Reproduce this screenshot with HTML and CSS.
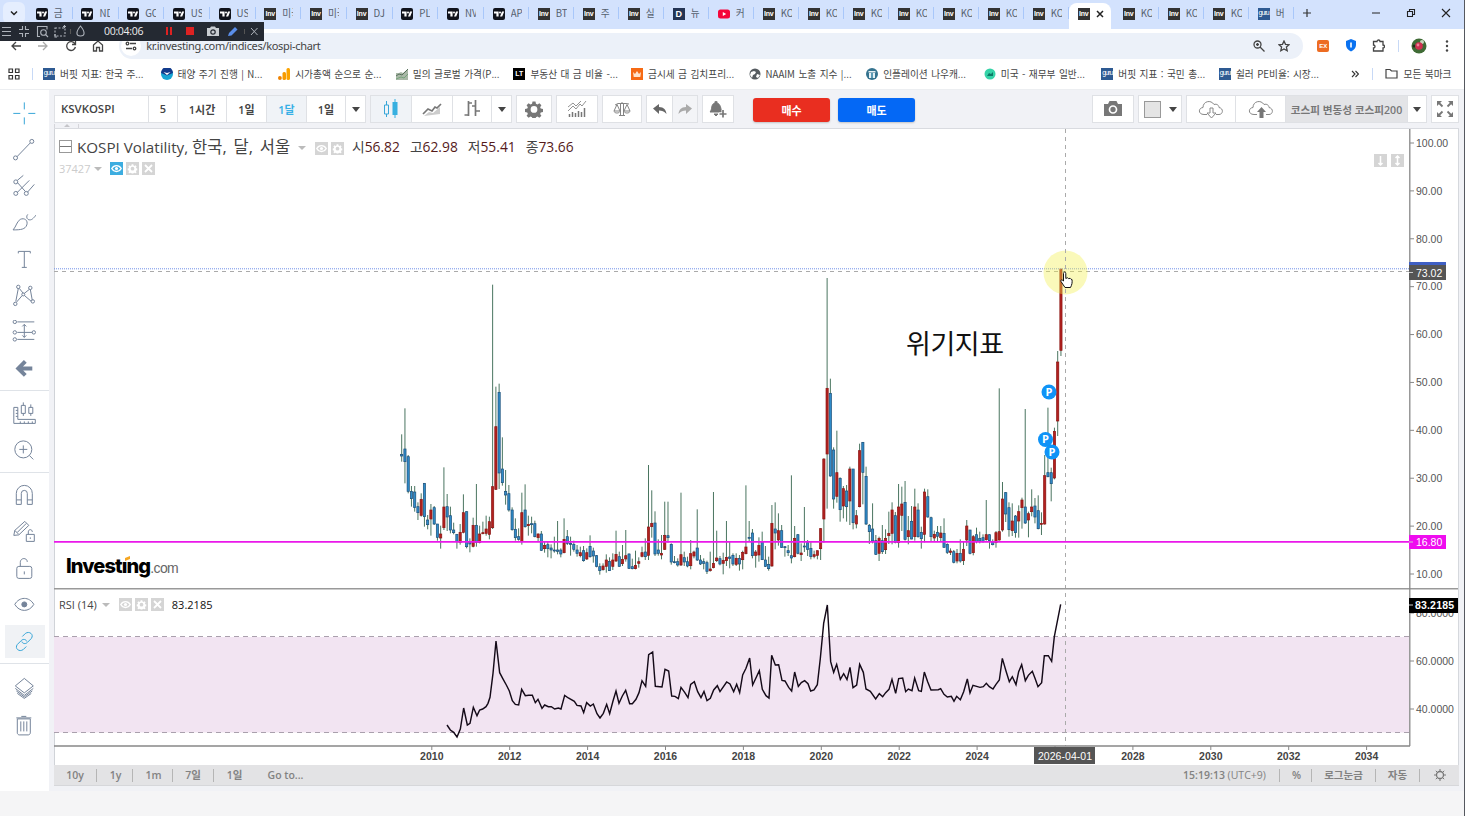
FILE: index.html
```html
<!DOCTYPE html>
<html lang="ko">
<head>
    <meta charset="UTF-8">
    <meta name="viewport" content="width=device-width, initial-scale=1.0">
    <title>KOSPI Volatility</title>
    <link rel="stylesheet" href="styles.css">
</head>
<body>

    <!-- shared icons -->
    <svg class="defs" width="0" height="0">
        <symbol id="tv" viewBox="0 0 12 12"><rect width="12" height="12" rx="2" fill="#10131c"/><path d="M1 3.500h4.600v5H3.400v-3H1zM9 3.500h2.200l-2 5H7z" fill="#fff"/><circle cx="7" cy="4.500" r="1" fill="#fff"/></symbol>
        <symbol id="yt" viewBox="0 0 12 12"><rect y="1.500" width="12" height="9" rx="2.500" fill="#f5063b"/><path d="M4.800 4l3.400 2-3.400 2z" fill="#fff"/></symbol>
        <symbol id="eye" viewBox="0 0 13 13"><path d="M1.800 6.500C4 2.600 9 2.600 11.200 6.500 9 10.400 4 10.400 1.800 6.500z" fill="none" stroke="#fff" stroke-width="1.400"/><circle cx="6.500" cy="6.500" r="1.600" fill="#fff"/></symbol>
        <symbol id="gear" viewBox="0 0 24 24"><path fill-rule="evenodd" d="M10 2h4l.6 3 2 .9 2.600-1.700 2.700 2.700-1.700 2.600.8 1.900 3 .6v4l-3 .6-.8 2 1.700 2.500-2.700 2.700-2.600-1.700-2 .9-.6 3h-4l-.6-3-2-.9-2.600 1.700-2.700-2.700 1.700-2.500-.8-2-3-.6v-4l3-.6.8-1.900L2.100 6.900l2.700-2.700 2.600 1.700 2-.9zM12 8a4.500 4.500 0 1 0 0 9 4.500 4.500 0 0 0 0-9z"/></symbol>
        <symbol id="x" viewBox="0 0 13 13"><path d="M3 3l7 7M10 3l-7 7" stroke="#fff" stroke-width="1.800"/></symbol>
    </svg>

    <header class="browser">
        <div class="tabstrip">
            <div class="tab-search"><svg width="8" height="6"><path d="M1 1.500l3 3 3-3" fill="none" stroke="#222" stroke-width="1.500"/></svg></div>
            <div class="tabs" id="tabs"></div>
            <svg class="new-tab" width="10" height="10"><path d="M5 1v8M1 5h8" stroke="#333" stroke-width="1.200"/></svg>
            <div class="window-buttons">
                <svg width="10" height="10"><path d="M1 5h8" stroke="#222"/></svg>
                <svg width="10" height="10"><path d="M1.500 3.500h5v5h-5zM3.500 3V1.500h5v5H7" fill="none" stroke="#222" stroke-width="1.100"/></svg>
                <svg width="10" height="10"><path d="M1 1l8 8M9 1L1 9" stroke="#222" stroke-width="1.100"/></svg>
            </div>
        </div>

        <div class="addressbar">
            <svg class="nav" width="12" height="12" viewBox="0 0 12 12"><path d="M11 6H2M6 2L2 6l4 4"/></svg>
            <svg class="nav faded" width="12" height="12" viewBox="0 0 12 12"><path d="M1 6h9M6 2l4 4-4 4"/></svg>
            <svg class="nav" width="12" height="12" viewBox="0 0 12 12"><path d="M10 4A4.400 4.400 0 1 0 10.400 7M10.500 1v3.500H7"/></svg>
            <svg class="nav" width="12" height="12" viewBox="0 0 12 12"><path d="M1.500 5L6 1l4.500 4v6H7.500V7.500h-3V11h-3z"/></svg>
            <div class="omnibox">
                <span class="site-info"><svg class="nav" width="12" height="12" viewBox="0 0 12 12"><path d="M5 3.500h6M1 8.500h6"/><circle cx="2.500" cy="3.500" r="1.300"/><circle cx="9.500" cy="8.500" r="1.300"/></svg></span>
                <span class="url">kr.investing.com/indices/kospi-chart</span>
                <svg class="nav" width="12" height="12" viewBox="0 0 12 12"><circle cx="4.500" cy="4.500" r="3.500"/><path d="M7 7l4.500 4.500M3 4.500h3M4.500 3v3"/></svg>
                <svg class="nav star" width="12" height="12" viewBox="0 0 12 12"><path d="M6 1l1.500 3.300 3.600.4-2.700 2.400.8 3.600L6 8.900l-3.200 1.800.8-3.600L.9 4.700l3.600-.4z"/></svg>
            </div>
            <span class="ext-ex">EX</span>
            <svg class="shield" width="12" height="13"><path d="M6 0l5 2v4c0 3-2 5-5 6.500C3 11 1 9 1 6V2z" fill="#0a72f0"/><rect x="5.200" y="3.500" width="1.600" height="5" fill="#fff"/></svg>
            <svg class="nav puzzle" width="13" height="13" viewBox="0 0 13 13"><path d="M1.500 2.500h3.500c0-2 3-2 3 0h3v3.500c2 0 2 3 0 3v3h-9.500V9c2 0 2-3 0-3z"/></svg>
            <i class="bar"></i>
            <svg class="avatar" width="16" height="16"><circle cx="8" cy="8" r="7.500" fill="#3f6b35"/><circle cx="11" cy="4" r="2" fill="#c9d6bd"/><circle cx="3" cy="8" r="1.500" fill="#202b1c"/><circle cx="8" cy="8" r="3.800" fill="#cf2f50"/><circle cx="7" cy="7" r="1.400" fill="#f08296"/></svg>
            <svg width="4" height="14" fill="#444"><circle cx="2" cy="2.500" r="1.200"/><circle cx="2" cy="7" r="1.200"/><circle cx="2" cy="11.500" r="1.200"/></svg>
        </div>

        <div class="bookmarks">
            <svg class="apps" width="12" height="12" viewBox="0 0 12 12"><path d="M1 1h3.500v3.500H1zM7.500 1H11v3.500H7.500zM1 7.500h3.500V11H1zM7.500 7.500H11V11H7.500z" fill="none" stroke="#333" stroke-width="1.200"/></svg>
            <i class="bar"></i>
            <div class="bookmark"><b class="fav guru">guru</b>버핏 지표: 한국 주...</div>
            <div class="bookmark"><svg width="12" height="12"><circle cx="6" cy="6" r="6" fill="#17a5d4"/><path d="M0 5a6 6 0 0 1 12 0L6 7.500z" fill="#123a8c"/><path d="M2.500 4L6 7l3.500-3L6 5z" fill="#fff"/></svg>태양 주기 진행 | N...</div>
            <div class="bookmark"><svg width="12" height="12"><rect x="8.500" width="3.500" height="12" rx="1.500" fill="#fba300"/><rect x="4.500" y="4" width="3.500" height="8" rx="1.500" fill="#f79b00"/><circle cx="1.900" cy="10" r="1.900" fill="#ef8200"/></svg>시가총액 순으로 순...</div>
            <div class="bookmark"><svg width="12" height="12"><path d="M0 5h3l2-1 2 1 5-4v11H0z" fill="#a9b8a7"/><path d="M0 8l3-2 3 1 6-6" fill="none" stroke="#56705b"/><path d="M0 11l5-2 3 1 4-4" fill="none" stroke="#76a37c"/></svg>밀의 글로벌 가격(P...</div>
            <div class="bookmark"><b class="fav lt">LT</b>부동산 대 금 비율 -...</div>
            <div class="bookmark"><svg width="12" height="12"><rect width="12" height="12" fill="#f66a14"/><path d="M2 4l2 2 2-3 2 3 2-2-.7 5H2.700z" fill="#ffe4cc"/></svg>금시세 금 김치프리...</div>
            <div class="bookmark"><svg width="12" height="12"><circle cx="6" cy="6" r="5.500" fill="#555b60"/><path d="M2 4l3-1 2 1-1 2-2 1-1 3-2-3zM8 6l3 1-2 3-2-1z" fill="#fff"/></svg>NAAIM 노출 지수 |...</div>
            <div class="bookmark"><svg width="12" height="12"><circle cx="6" cy="6" r="6" fill="#35738f"/><path d="M2.500 3h7v1.500h-7zM3 5h6v5H3z" fill="#e6f0f4"/><path d="M5 5h2v5H5z" fill="#5b9ab5"/></svg>인플레이션 나우캐...</div>
            <div class="bookmark"><svg width="12" height="12"><circle cx="6" cy="6" r="5.500" fill="#35d3a8"/><path d="M3 8l2-3 2 1 2-2v4z" fill="#0b7b66"/></svg>미국 - 재무부 일반...</div>
            <div class="bookmark"><b class="fav guru">guru</b>버핏 지표 : 국민 총...</div>
            <div class="bookmark"><b class="fav guru">guru</b>쉴러 PE비율: 시장...</div>
            <svg class="more" width="8" height="8"><path d="M1 1l3 3-3 3M4.500 1l3 3-3 3" fill="none" stroke="#333" stroke-width="1.100"/></svg>
            <i class="bar"></i>
            <svg class="folder" width="13" height="11"><path d="M1 1.500h4l1.500 1.500H12v7H1z" fill="none" stroke="#444" stroke-width="1.200"/></svg>
            <span>모든 북마크</span>
        </div>
    </header>

    <!-- screen recorder bar -->
    <div class="recorder">
        <svg width="88" height="19" viewBox="0 0 88 19" fill="none" stroke="#aeb3bb" stroke-width="1.100">
            <path d="M2 5.500h9M2 9.500h9M2 13.500h9M19 7.500h3.500V4M29 7.500h-3.500V4M19 11.500h3.500V15M29 11.500h-3.500V15M40 14.500h-2.500v-10h9.500v3"/>
            <circle cx="43.500" cy="10.500" r="2.800"/><path d="M45.500 12.500l2.500 2.500"/>
            <path d="M55 6h10v8H55z" stroke-dasharray="2 1.500"/><path d="M63 4.500h3M64.500 3v3M55 12v3h2"/>
            <path d="M70.500 7v5" stroke="#555"/>
            <path d="M80.500 4c-5 6-4.500 10 0 10s5-4 0-10z"/>
        </svg>
        <span class="rec-time">00:04:06</span>
        <svg width="98" height="19" viewBox="0 0 98 19">
            <path d="M3 5h2v8H3zM7 5h2v8H7zM23 5h8v8h-8z" fill="#dd2222"/>
            <path d="M44 6h3l1-1.500h4L53 6h3v8H44z" fill="#c9cdd2"/><circle cx="50" cy="10" r="2.200" fill="none" stroke="#262a33" stroke-width="1.200"/>
            <path d="M65 14l1-3 6-6 2.500 2.500-6 6z" fill="#5a8eea"/>
            <path d="M81.500 7v5" stroke="#555"/><path d="M88 6l6.500 7M94.500 6L88 13" stroke="#aeb3bb"/>
        </svg>
    </div>

    <main class="page">
        <nav class="drawing-tools">
            <svg class="tool" viewBox="0 0 24 24"><path class="blue" d="M12 1v7M12 16v7M1 12h7M16 12h7"/></svg>
            <svg class="tool" viewBox="0 0 24 24"><path d="M4.500 19.500L18 5.500"/><circle cx="3.200" cy="20.500" r="2"/><circle cx="19.500" cy="4" r="2"/></svg>
            <svg class="tool" viewBox="0 0 24 24"><path d="M5 6l6-5M5 8l8 9M5 18L17 6M15 18l7-8"/><circle cx="3.500" cy="7.500" r="2"/><circle cx="3.500" cy="19" r="2"/><circle cx="14" cy="19" r="2"/></svg>
            <svg class="tool" viewBox="0 0 24 24"><path d="M.8 19.500C4 16 4.500 11 8 9c4-2 8 1 6.500 5.500-1.500 4.500-6 5-13.700 5zM15.500 4c-2 2-1 5.500 2 5.500 2 0 3-1 6.500-5"/></svg>
            <svg class="tool" viewBox="0 0 24 24"><path d="M6 6V4h12v2M12 4v16M9.500 20h5"/></svg>
            <svg class="tool" viewBox="0 0 24 24"><path d="M3.500 18L6 5M7 5l4 5M12 10l5-4M18 6l2 11M4 19l6-7M12 12l7 6"/><circle cx="6" cy="3.500" r="1.700"/><circle cx="18" cy="4.500" r="1.700"/><circle cx="11" cy="11" r="1.500"/><circle cx="3" cy="20.500" r="1.700"/><circle cx="20.500" cy="18" r="1.700"/></svg>
            <svg class="tool" viewBox="0 0 24 24"><path d="M5 2.500h17M5 13h15M5 20h17M12 5v13M10 7l2-2 2 2M10 16l2 2 2-2"/><circle cx="2.500" cy="2.500" r="1.700"/><circle cx="2.500" cy="13" r="1.700"/><circle cx="21.500" cy="13" r="1.700"/><circle cx="2.500" cy="20" r="1.700"/></svg>
            <svg class="tool" viewBox="0 0 24 24"><path class="thick" d="M20 12H7M13 5l-7 7 7 7"/></svg>
            <hr>
            <svg class="tool" viewBox="0 0 24 24"><path d="M1.500 6h4v12H23v4H1.500zM3.500 9h2M3.500 12h2M3.500 15h2M8 22v-2M12 22v-2M16 22v-2M20 22v-2M9 4h4v8H9zM11 1v3M11 12v2.500M16.500 6h4v6h-4zM18.500 3v3M18.500 12v2.500"/></svg>
            <svg class="tool" viewBox="0 0 24 24"><circle cx="11" cy="11" r="8.500"/><path d="M7 11h8M11 7v8M17 17l4 4"/></svg>
            <hr>
            <svg class="tool" viewBox="0 0 24 24"><path d="M4 21V10a8 8 0 0 1 16 0v11h-5V10a3 3 0 0 0-6 0v11zM4 16.500h5M15 16.500h5"/></svg>
            <svg class="tool" viewBox="0 0 24 24"><path d="M1.500 16l1-5 10-9 4 4-10 9.500zM2.500 11l4 4M5 13l9-9M14 15h8v7h-8zM16 15v-2.500c0-3 4-3 4 0M18 18v1.500"/></svg>
            <svg class="tool" viewBox="0 0 24 24"><rect x="4.500" y="10" width="15" height="12" rx="2"/><path d="M8 10V6c0-5 7-5 7-.5M12 15v3"/></svg>
            <svg class="tool" viewBox="0 0 24 24"><path d="M2.500 12C7 4 17 4 21.500 12 17 20 7 20 2.500 12z"/><circle cx="12" cy="12" r="2.500" fill="#75849a"/></svg>
            <svg class="tool selected" viewBox="0 0 24 24"><path class="blue" d="M10 7l3-3c4-3 9 1 6 5l-4 4c-2 2-5 1-5.500-1M14 17l-3 3c-4 3-9-1-6-5l4-4c2-2 5-1 5.500 1"/></svg>
            <hr>
            <svg class="tool" viewBox="0 0 24 24"><path d="M12 2l9 7.500-9 7-9-7zM3 12l9 7 9-7M4 14.500l8 6 8-6M5 17l7 5 7-5"/></svg>
            <svg class="tool" viewBox="0 0 24 24"><path d="M5 5.500h13v14c0 1-1 2-2 2H7c-1 0-2-1-2-2zM4 4.500h15M9 3h5M8.500 8v10M11.500 8v10M14.500 8v10"/></svg>
        </nav>

        <section class="workspace">
            <div class="toolbar">
                <div class="group ranges">
                    <button class="symbol">KSVKOSPI</button>
                    <button class="w29 five">5</button>
                    <button class="w49">1시간</button>
                    <button class="w40">1일</button>
                    <button class="w40 active">1달</button>
                    <button class="w39">1일</button>
                    <button class="caret"></button>
                </div>
                <div class="group styles">
                    <button class="w40 active"><svg width="16" height="20"><path d="M3.500 2v4M3.500 15v3M1.500 6h4v9h-4z" fill="none" stroke="#37a6d8"/><path d="M9.500 3h5v13h-5zM11.500 0h1v19h-1z" fill="#37b0e0"/></svg></button>
                    <button class="w41"><svg width="20" height="16"><path d="M2 15l5-4 4 1 7-6v7z" fill="#ccc"/><path d="M1 13l5-5 4 2 3-4 2 1 4-4" fill="none" stroke="#777" stroke-width="1.700"/></svg></button>
                    <button class="w39"><svg width="18" height="20"><path d="M5.500 2v15M5.500 4H9M1.500 16h4M12.500 1v16M9 7h3.500M12.500 12H17" fill="none" stroke="#777" stroke-width="1.700"/></svg></button>
                    <button class="caret"></button>
                </div>
                <div class="group settings"><button class="w34"><svg width="18" height="18" fill="#777"><use href="#gear"/></svg></button></div>
                <div class="group"><button class="w40"><svg width="20" height="18"><path d="M2.500 17v-3M5.500 17v-5M8.500 17v-4M11.500 17v-6M14.500 17v-5M17.500 17V8" stroke="#777" stroke-width="1.500"/><path d="M1 11l5-5 3 3 4-5 2 2 4-5M1 7l5-4 3 3 5-5" fill="none" stroke="#777" stroke-width=".8"/></svg></button></div>
                <div class="group"><button class="w38"><svg width="18" height="18"><path d="M2 5l3-1.500h8L16 4M9 2v2M7.500 4v11M10.500 4v11M6 15.500h6M4 4.500L1 11h6zM14 4.500L11 11h6zM1 11.500c1 2 5 2 6 0M11 11.500c1 2 5 2 6 0" fill="none" stroke="#777" stroke-width=".9"/></svg></button></div>
                <div class="group history">
                    <button><svg width="14" height="12"><path d="M6 1v3c5 0 7 3 7.500 7C11 8 9 7.500 6 7.500V11L0 5.500z" fill="#666"/></svg></button>
                    <button class="dim"><svg width="14" height="12"><path d="M8 1v3C3 4 1 7 .5 11 3 8 5 7.500 8 7.500V11l6-5.500z" fill="#aaa"/></svg></button>
                </div>
                <div class="group alarm"><button><svg width="18" height="17"><path d="M7 0c1 0 1 1 1 2 4 1 3.500 6 5 9H1C3.500 9 1.500 3 6 2c0-1 0-2 1-2zM5 13h4l-2 2z" fill="#777" stroke="#777"/><path d="M14 9v8M10 13h8" stroke="#fff" stroke-width="3"/><path d="M14 9v7.500M10.500 13h7" stroke="#777" stroke-width="1.700"/></svg></button></div>
                <button class="trade buy">매수</button>
                <button class="trade sell">매도</button>

                <div class="toolbar-right">
                    <div class="group"><button class="w40"><svg width="20" height="16"><path d="M1 3h4l1.500-3h7L15 3h4v12H1z" fill="#777"/><circle cx="10" cy="8.500" r="3.500" fill="none" stroke="#fff" stroke-width="1.700"/></svg></button></div>
                    <div class="group"><button class="swatch-btn"><i class="swatch"></i><i class="arrow"></i></button></div>
                    <div class="group save">
                        <button class="w48"><svg width="26" height="20"><path d="M9 15.500H6C0 15.500 0 9 5 8.500 5 2 13 .5 16 5.500c3-1 5 1 5 3 5 1 4 7 0 7h-3M12 9h3v5h3l-4.500 5L9 14h3z" fill="none" stroke="#888"/></svg></button>
                        <button class="w50"><svg width="26" height="20"><path d="M9 15.500H6C0 15.500 0 9 5 8.500 5 2 13 .5 16 5.500c3-1 5 1 5 3 5 1 4 7 0 7h-3" fill="none" stroke="#888"/><path d="M13.500 8L18 13h-2.500v6h-4v-6H9z" fill="#777"/></svg></button>
                        <button class="layout-name">코스피 변동성 코스피200</button>
                        <button class="caret"></button>
                    </div>
                    <div class="group"><button class="w26"><svg width="20" height="18"><path d="M7.500 6.500l-4-4M12.500 6.500l4-4M7.500 11.500l-4 4M12.500 11.500l4 4" stroke="#777" stroke-width="1.800"/><path d="M2 6V1h5zM13 1h5v5zM2 12v5h5zM13 17h5v-5z" fill="#777"/></svg></button></div>
                </div>
            </div>
            <div class="strip"><i></i></div>

            <div class="chart">
                <svg id="chart" width="1405" height="636" viewBox="54 129 1405 636"></svg>
                <div class="legend main-legend">
                    <i class="collapse"></i>
                    <span class="title">KOSPI Volatility, <span class="ko">한국, 달, 서울</span></span>
                    <i class="arrow pale"></i>
                    <svg class="mini" width="13" height="13"><use href="#eye"/></svg>
                    <svg class="mini" width="13" height="13" fill="#fff"><use href="#gear" x="1.500" y="1.500" width="10" height="10"/></svg>
                    <span class="ohlc"><span>시<b>56.82</b></span><span>고<b>62.98</b></span><span>저<b>55.41</b></span><span>종<b>73.66</b></span></span>
                </div>
                <div class="legend compare-legend">
                    <span>37427</span>
                    <i class="arrow pale"></i>
                    <svg class="mini on" width="13" height="13"><use href="#eye"/></svg>
                    <svg class="mini" width="13" height="13" fill="#fff"><use href="#gear" x="1.500" y="1.500" width="10" height="10"/></svg>
                    <svg class="mini" width="13" height="13"><use href="#x"/></svg>
                </div>
                <div class="legend rsi-legend">
                    <span>RSI (14)</span>
                    <i class="arrow pale"></i>
                    <svg class="mini" width="13" height="13"><use href="#eye"/></svg>
                    <svg class="mini" width="13" height="13" fill="#fff"><use href="#gear" x="1.500" y="1.500" width="10" height="10"/></svg>
                    <svg class="mini" width="13" height="13"><use href="#x"/></svg>
                    <span class="rsi-value">83.2185</span>
                </div>
                <div class="logo"><b>Investıng</b><span>.com</span><i></i></div>
                <div class="scroll-hints">
                    <svg width="13" height="13"><path d="M6.500 2v9M4.500 9l2 2 2-2" stroke="#fff" stroke-width="1.500" fill="none"/></svg>
                    <svg width="13" height="13"><path d="M6.500 2v9M4.500 9l2 2 2-2M4.500 4l2-2 2 2" stroke="#fff" stroke-width="1.500" fill="none"/></svg>
                </div>
            </div>

            <footer class="bottom-bar">
                <span class="cell c1">10y</span><span class="cell c2">1y</span><span class="cell c3">1m</span><span class="cell c4">7일</span><span class="cell c5">1일</span><span class="cell goto">Go to...</span>
                <span class="cell clock"><b>15:19:13</b> (UTC+9)</span><span class="cell pct">%</span><span class="cell log">로그눈금</span><span class="cell auto">자동</span><span class="cell cog"><svg width="12" height="12" viewBox="0 0 12 12" fill="none" stroke="#777"><circle cx="6" cy="6" r="3.500" stroke-width="1.300"/><path d="M6 0v2M6 10v2M0 6h2M10 6h2M1.800 1.800l1.300 1.300M8.900 8.900l1.300 1.300M1.800 10.200l1.300-1.300M8.900 3.100l1.300-1.300"/></svg></span>
            </footer>
        </section>
    </main>

    <script src="chart.js"></script>
</body>
</html>
```

FILE: styles.css
```css
* {
    box-sizing: border-box;
}

body {
    margin: 0;
    width: 1465px;
    height: 816px;
    overflow: hidden;
    position: relative;
    background: #f5f5f6;
    border-right: 1px solid #55585f;
    font-family: "Open Sans", "Noto Sans CJK KR", sans-serif;
    font-size: 11px;
    color: #444;
}

svg {
    display: block;
    flex: none;
}

.defs {
    position: absolute;
}

button {
    padding: 0;
    border: none;
    background: #fff;
    font: inherit;
    color: inherit;
    display: flex;
    align-items: center;
    justify-content: center;
    white-space: nowrap;
}

/* browser */
.browser {
    height: 90px;
    background: #fff;
    border-bottom: 1px solid #eceef1;
    font-family: "Noto Sans CJK KR", sans-serif;
    font-size: 9.700px;
}

.tabstrip {
    height: 29px;
    background: #d3e2fd;
    display: flex;
    align-items: flex-start;
    padding-left: 3px;
}

.tab-search {
    width: 22px;
    height: 22px;
    margin: 2px 2.300px 0 0;
    border-radius: 6px;
    background: #e5eefe;
    display: flex;
    align-items: center;
    justify-content: center;
}

.tabs {
    display: flex;
    width: 1267px;
}

.tab {
    flex: none;
    width: 45px;
    height: 29px;
    padding-left: 8.500px;
    display: flex;
    align-items: center;
    gap: 6px;
    position: relative;
    color: #555f6e;
    line-height: 27px;
    white-space: nowrap;
    padding-bottom: 2px;
}

.tab:nth-child(-n+10) {
    width: 45.700px;
}

.tab::after {
    content: "";
    position: absolute;
    right: 0;
    top: 7px;
    width: 1px;
    height: 12px;
    background: #a8c7fa;
}

.tab .label {
    width: 11px;
    overflow: hidden;
}

.tab.active {
    background: #fff;
    border-radius: 8px 8px 0 0;
    width: 42px;
    margin: 3px 3px 0 0;
    height: 26px;
    padding-bottom: 5px;
}

.tab.active::after {
    display: none;
}

.fav {
    flex: none;
    width: 12px;
    height: 12px;
    overflow: hidden;
    display: block;
    text-align: center;
    font: bold 7px/12px "Liberation Sans", sans-serif;
    color: #fff;
}

.fav.inv {
    background: #333;
    letter-spacing: -0.200px;
}

.fav.d {
    background: #243453;
    font-size: 9px;
}

.fav.guru {
    background: #2e5a92;
    font: 7px/10px "Liberation Sans", sans-serif;
    letter-spacing: -0.900px;
}

.fav.lt {
    background: #000;
}

.new-tab {
    margin: 8px 0 0 8px;
}

.window-buttons {
    margin: 8px 13px 0 auto;
    display: flex;
    gap: 25px;
}

.addressbar {
    height: 30px;
    padding: 3px 14px 0 10px;
    display: flex;
    align-items: center;
}

.nav {
    fill: none;
    stroke: #444;
    stroke-width: 1.300;
    margin-right: 15.300px;
}

.nav.faded {
    stroke: #aaa;
}

.omnibox {
    flex: none;
    width: 1184px;
    height: 26px;
    border-radius: 13px;
    background: #ecf1f9;
    display: flex;
    align-items: center;
}

.site-info {
    width: 20px;
    height: 20px;
    border-radius: 50%;
    background: #fff;
    margin: 0 5px 0 2px;
    display: flex;
    align-items: center;
    justify-content: center;
}

.url {
    font: 11px "Noto Sans", sans-serif;
    letter-spacing: -0.320px;
    margin-right: auto;
}

.omnibox .nav {
    margin-right: 13px;
}

.omnibox .site-info .nav {
    margin: 0;
}

.ext-ex {
    width: 12px;
    height: 12px;
    margin: 0 16px 0 14px;
    border-radius: 2px;
    background: #ed6c22;
    color: #fff;
    font: bold 6px/12px "Liberation Sans", sans-serif;
    text-align: center;
}

.shield {
    margin-right: 15px;
}

.puzzle {
    margin-right: 13px;
}

.bar {
    width: 1px;
    height: 12px;
    background: #c7d9f6;
}

.avatar {
    margin: 0 18px 0 12px;
}

.bookmarks {
    height: 30px;
    padding: 0 0 1px 8px;
    display: flex;
    align-items: center;
    white-space: nowrap;
    word-spacing: 0.700px;
}

.apps {
    margin-right: 12px;
}

.apps + .bar {
    margin-right: 10px;
}

.bookmark {
    width: 117.600px;
    flex: none;
    display: flex;
    align-items: center;
    gap: 5px;
}

.more {
    margin: 0 13px 0 14px;
}

.folder {
    margin: 0 6px 0 12px;
}

/* recorder */
.recorder {
    position: absolute;
    left: 0;
    top: 22px;
    width: 264px;
    height: 19px;
    background: #242932;
    display: flex;
}

.rec-time {
    width: 75px;
    padding-left: 16px;
    color: #eee;
    font: 10.500px/19px "Open Sans", sans-serif;
    letter-spacing: -0.300px;
}

/* page */
.page {
    display: flex;
    height: 701px;
    background: #f1f2f6;
}

.drawing-tools {
    width: 49px;
    background: #fff;
    padding-top: 6px;
    display: flex;
    flex-direction: column;
    align-items: center;
}

.drawing-tools hr {
    width: 49px;
    margin: 3px 0 5px;
    border: none;
    border-top: 1px solid #dfe3e8;
    flex: none;
}

.drawing-tools hr:last-of-type {
    margin: 4px 0 7px;
}

.tool {
    width: 40px;
    height: 36.400px;
    padding: 5.400px 8.700px 7px 7.300px;
    fill: none;
    stroke: #75849a;
    stroke-width: 1;
}

.tool .blue {
    stroke: #37a6d8;
}

.tool .thick {
    stroke-width: 4;
}

.tool.selected {
    background: #f0f2f5;
    height: 33px;
    padding: 4.500px 8.700px 4.500px 7.300px;
    margin: 1.500px 0;
}

.workspace {
    width: 1405px;
    margin-left: 5px;
    display: flex;
    flex-direction: column;
}

.toolbar {
    height: 34px;
    padding-top: 5px;
    display: flex;
    align-items: flex-start;
    font-weight: 600;
}

.group {
    display: flex;
    height: 28px;
    border: 1px solid #dfe1e5;
    margin-right: 4px;
    background: #fff;
}

.group button + button {
    border-left: 1px solid #dfe1e5;
}

.group button.active {
    background: #f0f3f7;
    color: #37b0e6;
}

.symbol {
    width: 93px;
    justify-content: flex-start;
    padding: 0 0 2px 6px;
    font-size: 11.400px;
}

.five {
    padding-bottom: 1px;
}

.w26 { width: 26px; }
.w29 { width: 29px; }
.w34 { width: 34px; }
.w38 { width: 38px; }
.w39 { width: 39px; }
.w40 { width: 40px; }
.w41 { width: 41px; }
.w48 { width: 48px; }
.w49 { width: 49px; }
.w50 { width: 50px; }

.caret {
    width: 20px;
}

.caret::after,
.arrow {
    content: "";
    border: 4px solid transparent;
    border-top: 5px solid #444;
    border-bottom: none;
}

.arrow.pale {
    border-top-color: #bbb;
    border-top-width: 4px;
}

.history button {
    width: 25px;
}

.history .dim {
    background: #f3f4f7;
}

.alarm button {
    width: 30px;
}

.trade {
    width: 77px;
    height: 24px;
    margin: 3px 8px 0 0;
    border-radius: 3px;
    color: #fff;
    font-weight: 700;
    box-shadow: 0 1px 2px rgba(0, 0, 0, 0.2);
}

.buy {
    margin-left: 15px;
    background: #e92e20;
}

.sell {
    background: #0468f5;
}

.toolbar-right {
    display: flex;
    margin-left: auto;
}

.toolbar-right .group:last-child {
    margin-right: 0;
}

.swatch-btn {
    width: 42px;
    gap: 8px;
}

.swatch {
    width: 17px;
    height: 17px;
    border: 1px solid #999;
    background: #e4e4e4;
}

.layout-name {
    width: 122px;
    background: #e3e4e7;
    color: #777;
    font-size: 10.600px;
}

.save .caret {
    width: 19px;
}

.strip {
    height: 5px;
    border-bottom: 1px solid #d9dbe0;
}

.strip i {
    display: block;
    width: 25px;
    height: 4px;
    border-right: 1px solid #d5d5da;
    border-left: 1px solid #d5d5da;
    position: relative;
}

.strip i::after {
    content: "";
    position: absolute;
    left: 9px;
    top: 0;
    border: 3px solid transparent;
    border-top: none;
    border-bottom-color: #c5c5c9;
}

.chart {
    position: relative;
    height: 636px;
    background: #fff;
    border-left: 1px solid #d0d3d8;
}

.chart > svg {
    margin-left: -1px;
}

.legend {
    position: absolute;
    left: 4px;
    display: flex;
    align-items: center;
    white-space: nowrap;
}

.main-legend {
    top: 9px;
    height: 20px;
}

.collapse {
    width: 13px;
    height: 13px;
    border: 1px solid #999;
    display: flex;
    align-items: center;
    margin: 0 5px 3px 0;
}

.collapse::after {
    content: "";
    width: 11px;
    border-top: 1px solid #777;
}

.title {
    font-size: 15.200px;
    width: 217px;
    line-height: 20px;
    margin-top: -3px;
}

.title .ko {
    font-size: 16.500px;
    word-spacing: 2.500px;
}

.main-legend .arrow {
    margin: 0 9px 0 4px;
}

.mini {
    background: #d5d5d5;
    margin-right: 3px;
}

.mini.on {
    background: #3cade0;
}

.ohlc {
    display: flex;
    gap: 10px;
    margin: -2px 0 0 5px;
    font-size: 13.800px;
    line-height: 18px;
}

.ohlc b {
    font-weight: 400;
    color: #551a1a;
}

.compare-legend {
    top: 32px;
    color: #ccc;
}

.compare-legend .arrow {
    margin: 0 8px 0 4px;
}

.rsi-legend {
    top: 468px;
}

.rsi-legend .arrow {
    margin: 0 9px 0 5px;
}

.rsi-value {
    margin-left: 5px;
    color: #111;
}

.logo {
    position: absolute;
    left: 11px;
    top: 425px;
    display: flex;
    align-items: baseline;
    font-family: "Liberation Sans", sans-serif;
    font-size: 14px;
    line-height: 24px;
    color: #666;
    letter-spacing: -0.600px;
}

.logo b {
    color: #000;
    font-family: Inter, sans-serif;
    font-weight: 800;
    font-size: 20px;
    letter-spacing: -0.900px;
}

.logo i {
    position: absolute;
    left: 59px;
    top: 3px;
    width: 5px;
    height: 3px;
    background: #f5a623;
    transform: skewY(-20deg);
}

.scroll-hints {
    position: absolute;
    right: 55px;
    top: 25px;
    display: flex;
    gap: 4px;
}

.scroll-hints svg {
    background: #d5d5d5;
}

.bottom-bar {
    height: 21px;
    background: #e3e3e5;
    border-bottom: 1px solid #d6d7da;
    display: flex;
    align-items: center;
    font-weight: 600;
    font-size: 10.500px;
    color: #828282;
}

.cell {
    display: flex;
    justify-content: center;
    height: 13px;
    line-height: 13px;
    border-right: 1px solid #b5b5b5;
    white-space: pre;
}

.c1 { width: 43px; }
.c2 { width: 36px; padding-left: 2px; }
.c3 { width: 40px; padding-left: 2px; }
.c4 { width: 41px; }
.c5 { width: 41px; border: none; }
.goto { width: 61px; border: none; }

.clock {
    margin-left: auto;
    width: 110px;
    font-weight: 400;
}

.clock b {
    font-weight: 600;
}

.pct { width: 32px; padding-left: 2px; }
.log { width: 64px; }
.auto { width: 44px; }
.cog { width: 39px; border: none; }

/* chart text */
.axis {
    font: 10.500px "Liberation Sans", sans-serif;
    fill: #555;
}

.axis.time {
    font-weight: bold;
    text-anchor: middle;
    fill: #444;
}

.axis.tag {
    fill: #fff;
}

.axis.strong {
    font-weight: bold;
}

.note {
    font: 27px "Noto Sans CJK KR", sans-serif;
    fill: #111;
}

.pin {
    font: bold 11px "Open Sans", sans-serif;
    fill: #fff;
    text-anchor: middle;
}
```

FILE: chart.js
```javascript
// browser tabs: [icon, label]
const tabs = [
    ['tv', '금'], ['tv', 'NDX'], ['tv', 'GOLD'], ['tv', 'USD'], ['tv', 'USD'],
    ['inv', '미국'], ['inv', '미국'], ['inv', 'DJI'], ['tv', 'PLT'], ['tv', 'NVD'],
    ['tv', 'APP'], ['inv', 'BTC'], ['inv', '주'], ['inv', '실'], ['d', '뉴'],
    ['yt', '커'], ['inv', 'KOS'], ['inv', 'KOS'], ['inv', 'KOS'], ['inv', 'KOS'],
    ['inv', 'KOS'], ['inv', 'KOS'], ['inv', 'KOS'], ['inv', ''], ['inv', 'KOS'],
    ['inv', 'KOS'], ['inv', 'KOS'], ['guru', '버']
];

const favText = { inv: 'Inv', d: 'D', guru: 'guru' };

document.getElementById('tabs').innerHTML = tabs.map(([icon, label]) => {
    const fav = favText[icon]
        ? `<b class="fav ${icon}">${favText[icon]}</b>`
        : `<svg width="12" height="12"><use href="#${icon}"/></svg>`;
    if (!label) {
        return `<div class="tab active">${fav}<svg width="8" height="8"><path d="M1 1l6 6M7 1L1 7" stroke="#222" stroke-width="1.500"/></svg></div>`;
    }
    return `<div class="tab">${fav}<span class="label">${label}</span></div>`;
}).join('');

// monthly candles: high, body top, body bottom, low (thirds of a pixel), r = up, b = down
const candles = `
493,553,558,575b 415,537,575,640b 555,560,664,670b 648,664,686,710b 648,666,712,725b 697,710,728,750b
670,688,736,740r 640,640,740,770b 735,750,764,778b 702,720,747,797r 708,713,762,765b 762,762,802,812b
767,792,804,836r 592,711,773,780r 672,710,741,783b 710,737,780,790b 758,780,788,793b 793,793,815,836b
762,787,817,824r 673,728,787,790r 724,725,830,835b 805,815,822,847b 743,766,829,832r 642,766,817,830b
767,792,817,820r 755,788,791,793r 737,777,790,797r 740,755,793,808r 44,650,773,777r 350,470,658,660r
341,367,609,657b 502,597,638,647b 600,664,675,704b 645,671,720,725b 712,720,779,782b 745,778,803,812b
775,800,808,812b 668,728,815,824r 643,720,770,773b 737,763,767,797r 740,761,763,790b 752,761,800,802b
790,792,803,815r 783,792,841,843b 815,826,836,848r 815,824,836,862b 823,834,840,865b 800,840,843,848b
753,840,844,853b 835,840,852,862b 745,808,848,850r 780,800,820,825b 800,820,823,857b 812,823,838,845b
825,840,850,860b 830,848,857,862r 828,842,872,875b 835,848,867,870r 796,829,860,863b 833,843,858,878b
855,857,889,892b 880,890,902,914b 880,888,899,902r 853,870,889,908r 862,874,902,903b 850,870,889,900r
782,853,873,876r 845,860,889,890b 825,868,881,888r 780,857,867,875r 850,852,895,897b 866,890,896,898b
842,886,896,898r 862,875,880,893r 830,848,859,862r 805,846,860,870b 585,771,856,870r 661,760,770,803r
724,759,852,858b 808,840,850,857b 795,850,855,868r 695,796,838,840r 695,797,803,818b 820,823,876,884b
858,875,878,880b 865,875,885,890b 668,854,885,888r 845,863,876,888b 860,875,888,892b 810,851,887,898r
842,846,858,865r 718,834,870,873b 855,870,882,885b 865,875,880,898b 872,878,904,912b 845,897,902,905r
666,880,893,895r 782,864,872,876r 858,866,882,886b 848,871,880,913r 753,862,872,888r 816,861,865,895b
850,856,882,888b 850,865,883,888r 855,865,882,902b 842,847,869,898r 646,831,851,853r 753,802,805,815b
777,789,857,865b 840,846,856,893r 802,826,855,875r 785,816,869,870b 828,870,889,891b 860,883,896,902b
705,760,888,890r 697,777,789,838b 730,782,810,827r 765,782,832,834b 829,830,833,860b 825,842,848,858b
616,857,864,880b 768,805,860,862r 792,794,850,853b 820,849,854,873r 711,828,831,846b 810,818,838,858b
815,835,860,868b 842,854,859,865r 842,842,856,868r 774,776,836,870r 565,567,747,818r 24,355,552,716r
326,370,618,620b 532,540,687,716b 482,608,679,698r 622,625,719,755b 648,656,708,745r 645,663,710,755b
590,597,693,765r 597,597,758,778b 720,737,762,775r 521,542,710,712r 516,517,607,703b 590,619,762,765b
762,766,785,822b 700,777,813,820b 795,812,853,855b 800,805,850,873r 765,812,845,852b 778,805,839,852r
725,790,797,822r 697,720,790,823r 726,737,817,820b 642,711,818,833r 650,702,736,783r 633,697,808,812b
738,782,800,823r 708,754,807,808b 656,711,800,812r 700,720,800,803b 770,787,806,836b 656,666,793,817r
658,680,741,743b 740,743,800,815b 782,793,804,815r 768,787,799,815b 768,789,803,815r 745,790,832,833b
820,823,847,852b 835,843,847,855r 840,845,877,880b 837,850,873,880r 808,850,873,878b 815,838,872,885r
750,768,810,828r 780,780,850,853b 795,800,848,856r 773,794,814,820b 785,805,813,820b 793,803,815,818b
690,794,809,812r 793,794,812,836b 808,816,824,826b 783,788,818,833r 355,785,810,812r 636,687,780,785r
666,668,732,756b 697,713,779,800b 700,753,782,798r 735,738,788,803b 706,725,753,803r 683,690,713,776r
417,711,759,762b 725,731,750,802r 658,711,725,739r 684,708,741,760b 676,722,776,778b 727,760,763,795r
555,617,762,764r 413,608,620,622b 593,608,641,694b 473,484,624,628r 243,276,453,498r -3,-3,241,258r
`.trim().split(/\s+/);

const rsi = `51,405 61,420 71,427 81,441 91,417 101,354 112,405 120,400 130,352 141,377 149,360 158,357 168,350
174,340 180,322 189,250 198,153 209,248 218,265 229,285 238,303 247,332 256,343 266,345 275,298 286,317 296,316
307,316 316,338 324,328 336,355 344,345 355,350 364,350 374,357 385,354 393,357 404,316 415,324 433,334 441,346
453,348 461,368 470,338 481,348 490,342 501,371 510,384 520,370 530,343 539,371 549,333 558,303 567,340 577,318
587,301 599,341 607,341 618,328 627,308 636,272 647,289 656,194 668,186 676,289 696,291 705,238 716,243 725,318
735,319 745,326 753,292 764,307 774,323 782,283 793,275 803,305 813,323 822,304 831,332 841,325 851,300 862,287
870,305 890,276 900,282 911,305 920,283 929,308 938,255 948,235 959,204 968,285 988,242 997,298 1008,317 1017,324
1025,196 1036,225 1046,224 1056,271 1065,273 1076,292 1085,303 1094,246 1105,289 1114,278 1124,272 1134,281
1142,303 1152,300 1162,284 1171,205 1181,100 1192,45 1202,215 1211,247 1220,223 1231,268 1241,251 1251,269
1260,232 1269,293 1280,285 1289,223 1300,247 1308,297 1321,304 1337,327 1348,311 1358,320 1367,308 1377,298
1386,268 1397,310 1406,266 1418,264 1427,305 1435,297 1446,302 1454,264 1466,302 1474,304 1483,246 1493,275
1503,300 1525,299 1532,296 1542,313 1552,321 1564,319 1572,334 1580,319 1591,329 1601,305 1612,267 1620,309
1629,286 1650,292 1660,290 1669,280 1678,290 1689,297 1698,283 1708,270 1717,205 1728,243 1738,275 1747,260
1758,284 1766,245 1775,224 1786,272 1795,256 1807,244 1815,265 1824,290 1835,278 1843,197 1855,197 1865,214
1873,140 1892,43`;

let out = '';

// rsi band
out += '<rect x="54" y="637" width="1355" height="95.500" fill="#f2e4f2"/>';
out += '<path d="M54 636.500H1409M54 732.500H1409" stroke="#aaa0ad" stroke-dasharray="5 4"/>';
out += `<polyline points="${rsi}" transform="translate(430 590) scale(.33333)" fill="none" stroke="#140a18" stroke-width="4.300"/>`;

// candles
candles.forEach((c, i) => {
    const color = c.endsWith('r') ? '#b3201f' : '#2f8bc9';
    const edge = c.endsWith('r') ? '#8a1512' : '#1c4f78';
    const [h, t, b, l] = c.slice(0, -1).split(',').map(v => 270 + v / 3);
    const x = 401.7 + i * 3.2475;
    out += `<path d="M${x} ${h}V${l}" stroke="#4a7560" stroke-width="1"/>`;
    out += `<rect x="${x - 1.1}" y="${t}" width="2.200" height="${Math.max(b - t, 1)}" fill="${color}" stroke="${edge}" stroke-width=".7"/>`;
});

// price lines
out += '<path d="M54 541.800H1409" stroke="#ea18ea" stroke-width="1.800"/>';
out += '<path d="M54 268.800H1409" stroke="#6f8fe8" stroke-dasharray="1 1"/>';
out += '<path d="M54 271.500H1409" stroke="#aaa" stroke-dasharray="4 4"/>';

// pointer highlight and crosshair
out += '<circle cx="1065.500" cy="272.500" r="22" fill="#f3ef4a" opacity=".38"/>';
out += '<path d="M1065.500 129V746" stroke="#aaa" stroke-dasharray="4 4"/>';
out += '<path d="M1063.500 273.500c0-2 2.300-2 2.300 0v5l1.500-.8 1.300.9 1.500-.3 1 1 .9.200c.4 3 0 5-1.500 8h-5.500l-4-6c-.7-1.500.8-2.300 2.500-.5z" fill="#fff" stroke="#111"/>';

// position pins
[[1049, 392], [1045.5, 439.5], [1052, 452]].forEach(([x, y]) => {
    out += `<circle cx="${x}" cy="${y}" r="7.500" fill="#0f93f7"/><text class="pin" x="${x}" y="${y + 3.5}">P</text>`;
});
out += '<text class="note" x="906" y="354" textLength="98">위기지표</text>';

// frame
out += '<path d="M54 588.800H1458" stroke="#999" stroke-width="1.500"/>';
out += '<path d="M54 746H1410M1409.800 129V746" stroke="#888" stroke-width="1.300" fill="none"/>';
out += '<path d="M1458.500 129V765" stroke="#d5d8dd"/>';

// price axis
for (let p = 100; p >= 10; p -= 10) {
    const y = 143 + (100 - p) * 4.789;
    out += `<path d="M1410 ${y}h4" stroke="#888"/><text class="axis" x="1416" y="${y + 3.8}">${p}.00</text>`;
}
[[80, 613], [60, 661], [40, 709]].forEach(([v, y]) => {
    out += `<path d="M1410 ${y}h4" stroke="#888"/><text class="axis" x="1416" y="${y + 3.8}">${v}.0000</text>`;
});

// value tags
out += '<rect x="1409" y="262" width="37" height="6" fill="#3f5fc4"/>';
out += '<rect x="1409" y="265" width="37" height="15" fill="#555"/><text class="axis tag" x="1416" y="276.500">73.02</text>';
out += '<rect x="1409" y="535" width="37" height="14" fill="#ef0cef"/><text class="axis tag" x="1416" y="545.800">16.80</text>';
out += '<rect x="1409" y="598" width="49" height="15" fill="#000"/><text class="axis tag strong" x="1415" y="609" textLength="39">83.2185</text>';
out += '<path d="M1409 272.500h4M1409 542h4M1409 605h4" stroke="#ccc"/>';

// time axis
for (let year = 2010; year <= 2034; year += 2) {
    const x = 431.8 + (year - 2010) * 38.95;
    out += `<path d="M${x} 746v4" stroke="#888"/>`;
    if (year !== 2026) out += `<text class="axis time" x="${x}" y="760">${year}</text>`;
}
out += '<rect x="1034" y="747" width="61" height="17" fill="#555"/><text class="axis tag" x="1038" y="760" textLength="54">2026-04-01</text>';

document.getElementById('chart').innerHTML = out;
```
